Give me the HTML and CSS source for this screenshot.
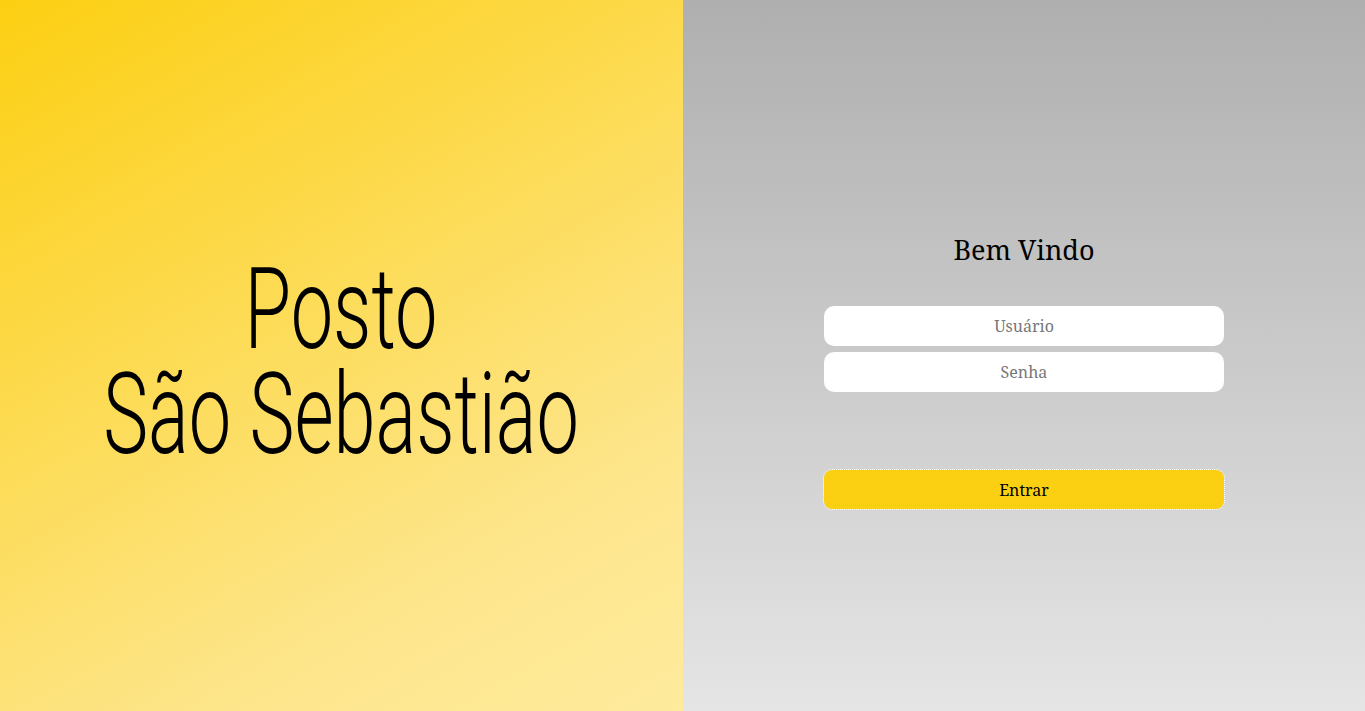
FILE: index.html
```html
<!DOCTYPE html>
<html lang="pt-BR">
<head>
<meta charset="utf-8">
<title>Posto São Sebastião</title>
<link rel="stylesheet" href="styles.css">
</head>
<body>
<main class="page">
  <section class="brand">
    <h1 class="brand-title"><span class="line">Posto</span><span class="line">São Sebastião</span></h1>
  </section>
  <section class="login">
    <form class="login-form">
      <h2 class="welcome">Bem Vindo</h2>
      <input class="field" type="text" placeholder="Usuário">
      <input class="field" type="password" placeholder="Senha">
      <button class="submit" type="button">Entrar</button>
    </form>
  </section>
</main>
</body>
</html>
```
FILE: styles.css
```css
* { box-sizing: border-box; }
html, body { margin: 0; padding: 0; height: 100%; }
body { font-family: "Noto Serif", "DejaVu Serif", serif; }
.page { display: grid; grid-template-columns: 683px 1fr; height: 711px; }
.brand {
  background: linear-gradient(150deg, #fccf12 0%, #fde58a 75%, #feeb9d 100%);
  display: flex; align-items: center; justify-content: center;
}
.brand-title {
  margin: 0; font-family: Roboto, "Liberation Sans", sans-serif; font-weight: 300;
  font-size: 113px; line-height: 105px; color: #000; text-align: center;
  display: flex; flex-direction: column; align-items: center;
  transform: scaleX(0.67);
  padding-top: 12px;
}
.line { display: block; white-space: nowrap; }
.login {
  background: linear-gradient(180deg, #afafaf 0%, #e5e5e5 100%);
  display: flex; align-items: center; justify-content: center; padding-top: 30px;
}
.login-form { width: 400px; display: flex; flex-direction: column; align-items: stretch; }
.welcome { margin: 0 0 38px; font-weight: 400; font-size: 27px; line-height: 36px; text-align: center; color: #000; }
.field {
  height: 40px; border: none; border-radius: 10px; background: #fff; margin-bottom: 6px;
  font-family: inherit; font-size: 16px; text-align: center; color: #333; outline: none;
}
.field::placeholder { color: #777; }
.submit {
  margin-top: 72px; height: 39px; border: none; border-radius: 8px; background: #fcd012;
  outline: 1px dotted #fff; font-family: inherit; font-size: 16px; color: #000;
}
```
